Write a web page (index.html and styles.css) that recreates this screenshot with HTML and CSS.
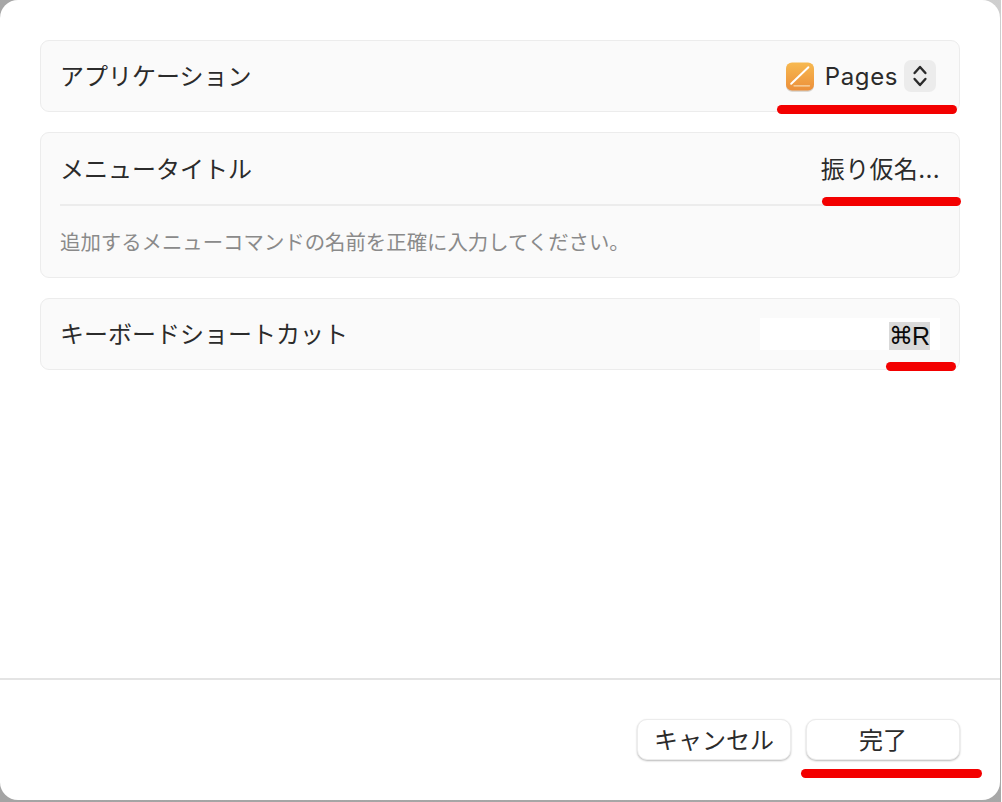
FILE: index.html
```html
<!DOCTYPE html>
<html lang="ja">
<head>
<meta charset="utf-8">
<title>キーボードショートカット</title>
<link rel="stylesheet" href="styles.css">
</head>
<body>
<div class="backdrop">
<div class="window">
  <main class="content">
    <section class="card row">
      <span class="label">アプリケーション</span>
      <div class="app-select">
        <svg class="pages-icon" width="30" height="30" viewBox="0 0 30 30">
          <defs>
            <linearGradient id="pg" x1="0" y1="0" x2="0" y2="1">
              <stop offset="0" stop-color="#f7b950"/>
              <stop offset="1" stop-color="#ec8f3a"/>
            </linearGradient>
          </defs>
          <rect x="1" y="1.4" width="28" height="28.4" rx="6" fill="#8f7f6a" opacity=".35"/>
          <rect x="1" y="0.5" width="28" height="28" rx="6" fill="url(#pg)"/>
          <path d="M6.2 21.8 L23.4 5.2" stroke="#fff" stroke-width="2" stroke-linecap="round"/>
          <path d="M9 23.8 H24.5" stroke="#f8d9ad" stroke-width="1.3" stroke-linecap="round"/>
        </svg>
        <span class="app-name">Pages</span>
        <span class="stepper">
          <svg width="16" height="26" viewBox="0 0 16 26" fill="none" stroke="#2a2a2a" stroke-width="2.4" stroke-linecap="round" stroke-linejoin="round">
            <path d="M2.6 10 L8 4 L13.4 10"/>
            <path d="M2.6 16 L8 22 L13.4 16"/>
          </svg>
        </span>
      </div>
    </section>

    <section class="card title-card">
      <div class="title-row">
        <span class="label">メニュータイトル</span>
        <span class="value">振り仮名...</span>
      </div>
      <p class="hint">追加するメニューコマンドの名前を正確に入力してください。</p>
    </section>

    <section class="card row">
      <span class="label">キーボードショートカット</span>
      <div class="shortcut-field"><span class="shortcut"><span class="cmd">⌘</span><span>R</span></span></div>
    </section>
  </main>

  <footer class="footer">
    <button class="btn">キャンセル</button>
    <button class="btn">完了</button>
  </footer>

  <span class="mark mark-app"></span>
  <span class="mark mark-title"></span>
  <span class="mark mark-key"></span>
  <span class="mark mark-done"></span>
</div>
</div>
</body>
</html>
```
FILE: styles.css
```css
* { box-sizing: border-box; }
html, body { margin: 0; height: 100%; }
body {
  width: 1002px;
  height: 802px;
  overflow: hidden;
  background: #fff;
  font-family: "Inter", "Noto Sans CJK JP", sans-serif;
  color: #2b2b2b;
}
.backdrop {
  width: 1001px;
  height: 802px;
  background: linear-gradient(225deg, #cfcfcf, #a8a8a8 40%, #a4a4a4);
}
.window {
  position: relative;
  width: 1000px;
  height: 800px;
  background: #fff;
  border-radius: 18px;
  display: flex;
  flex-direction: column;
}
.content {
  flex: 1;
  padding: 40px 40px 0;
  display: flex;
  flex-direction: column;
  gap: 20px;
}
.card {
  width: 920px;
  background: #fafafa;
  border: 1px solid #ececec;
  border-radius: 9px;
}
.row {
  height: 72px;
  padding: 0 19px;
  display: flex;
  align-items: center;
  justify-content: space-between;
}
.label, .value, .app-name {
  font-size: 24px;
  line-height: 30px;
  padding-top: 2px;
}
.value { letter-spacing: .35px; }
.app-select { display: flex; align-items: center; margin-right: 4px; }
.pages-icon { display: block; margin-right: 10px; margin-top: 1px; }
.app-name { margin-right: 6px; letter-spacing: .6px; }
.stepper {
  width: 32px;
  height: 32px;
  border-radius: 7px;
  background: #ececec;
  display: flex;
  align-items: center;
  justify-content: center;
}
.title-card { height: 146px; padding: 0 19px; }
.title-row {
  height: 73px;
  display: flex;
  align-items: center;
  justify-content: space-between;
  border-bottom: 2px solid #ececec;
}
.hint {
  margin: 0;
  padding-top: 24px;
  font-size: 20.4px;
  line-height: 26px;
  color: #8a8a8a;
}
.shortcut-field {
  width: 180px;
  height: 32px;
  background: #fff;
  display: flex;
  justify-content: flex-end;
  align-items: flex-end;
  padding-right: 10px;
}
.shortcut {
  height: 28px;
  background: #d9d9d9;
  color: #0a0a0a;
  font-family: "Liberation Sans", "DejaVu Sans", sans-serif;
  font-size: 25px;
  line-height: 28px;
  display: flex;
  align-items: center;
}
.cmd {
  font-family: "DejaVu Sans", sans-serif;
  font-size: 24px;
  letter-spacing: -1px;
}
.footer {
  height: 122px;
  border-top: 2px solid #e4e4e4;
  display: flex;
  justify-content: flex-end;
  align-items: flex-start;
  gap: 15px;
  padding: 39px 40px 0 0;
}
.btn {
  width: 154px;
  height: 41px;
  padding: 0 0 2px;
  border: 1px solid #ececec;
  border-radius: 10px;
  background: #fff;
  box-shadow: 0 1px 2px rgba(0,0,0,.28);
  font: inherit;
  font-size: 24px;
  color: #2b2b2b;
}
.mark {
  position: absolute;
  height: 9px;
  border-radius: 5px;
  background: #f30000;
}
.mark-app { left: 777px; top: 105px; width: 180px; }
.mark-title { left: 822px; top: 197px; width: 139px; }
.mark-key { left: 886px; top: 362px; width: 70px; }
.mark-done { left: 801px; top: 769px; width: 181px; }
```
